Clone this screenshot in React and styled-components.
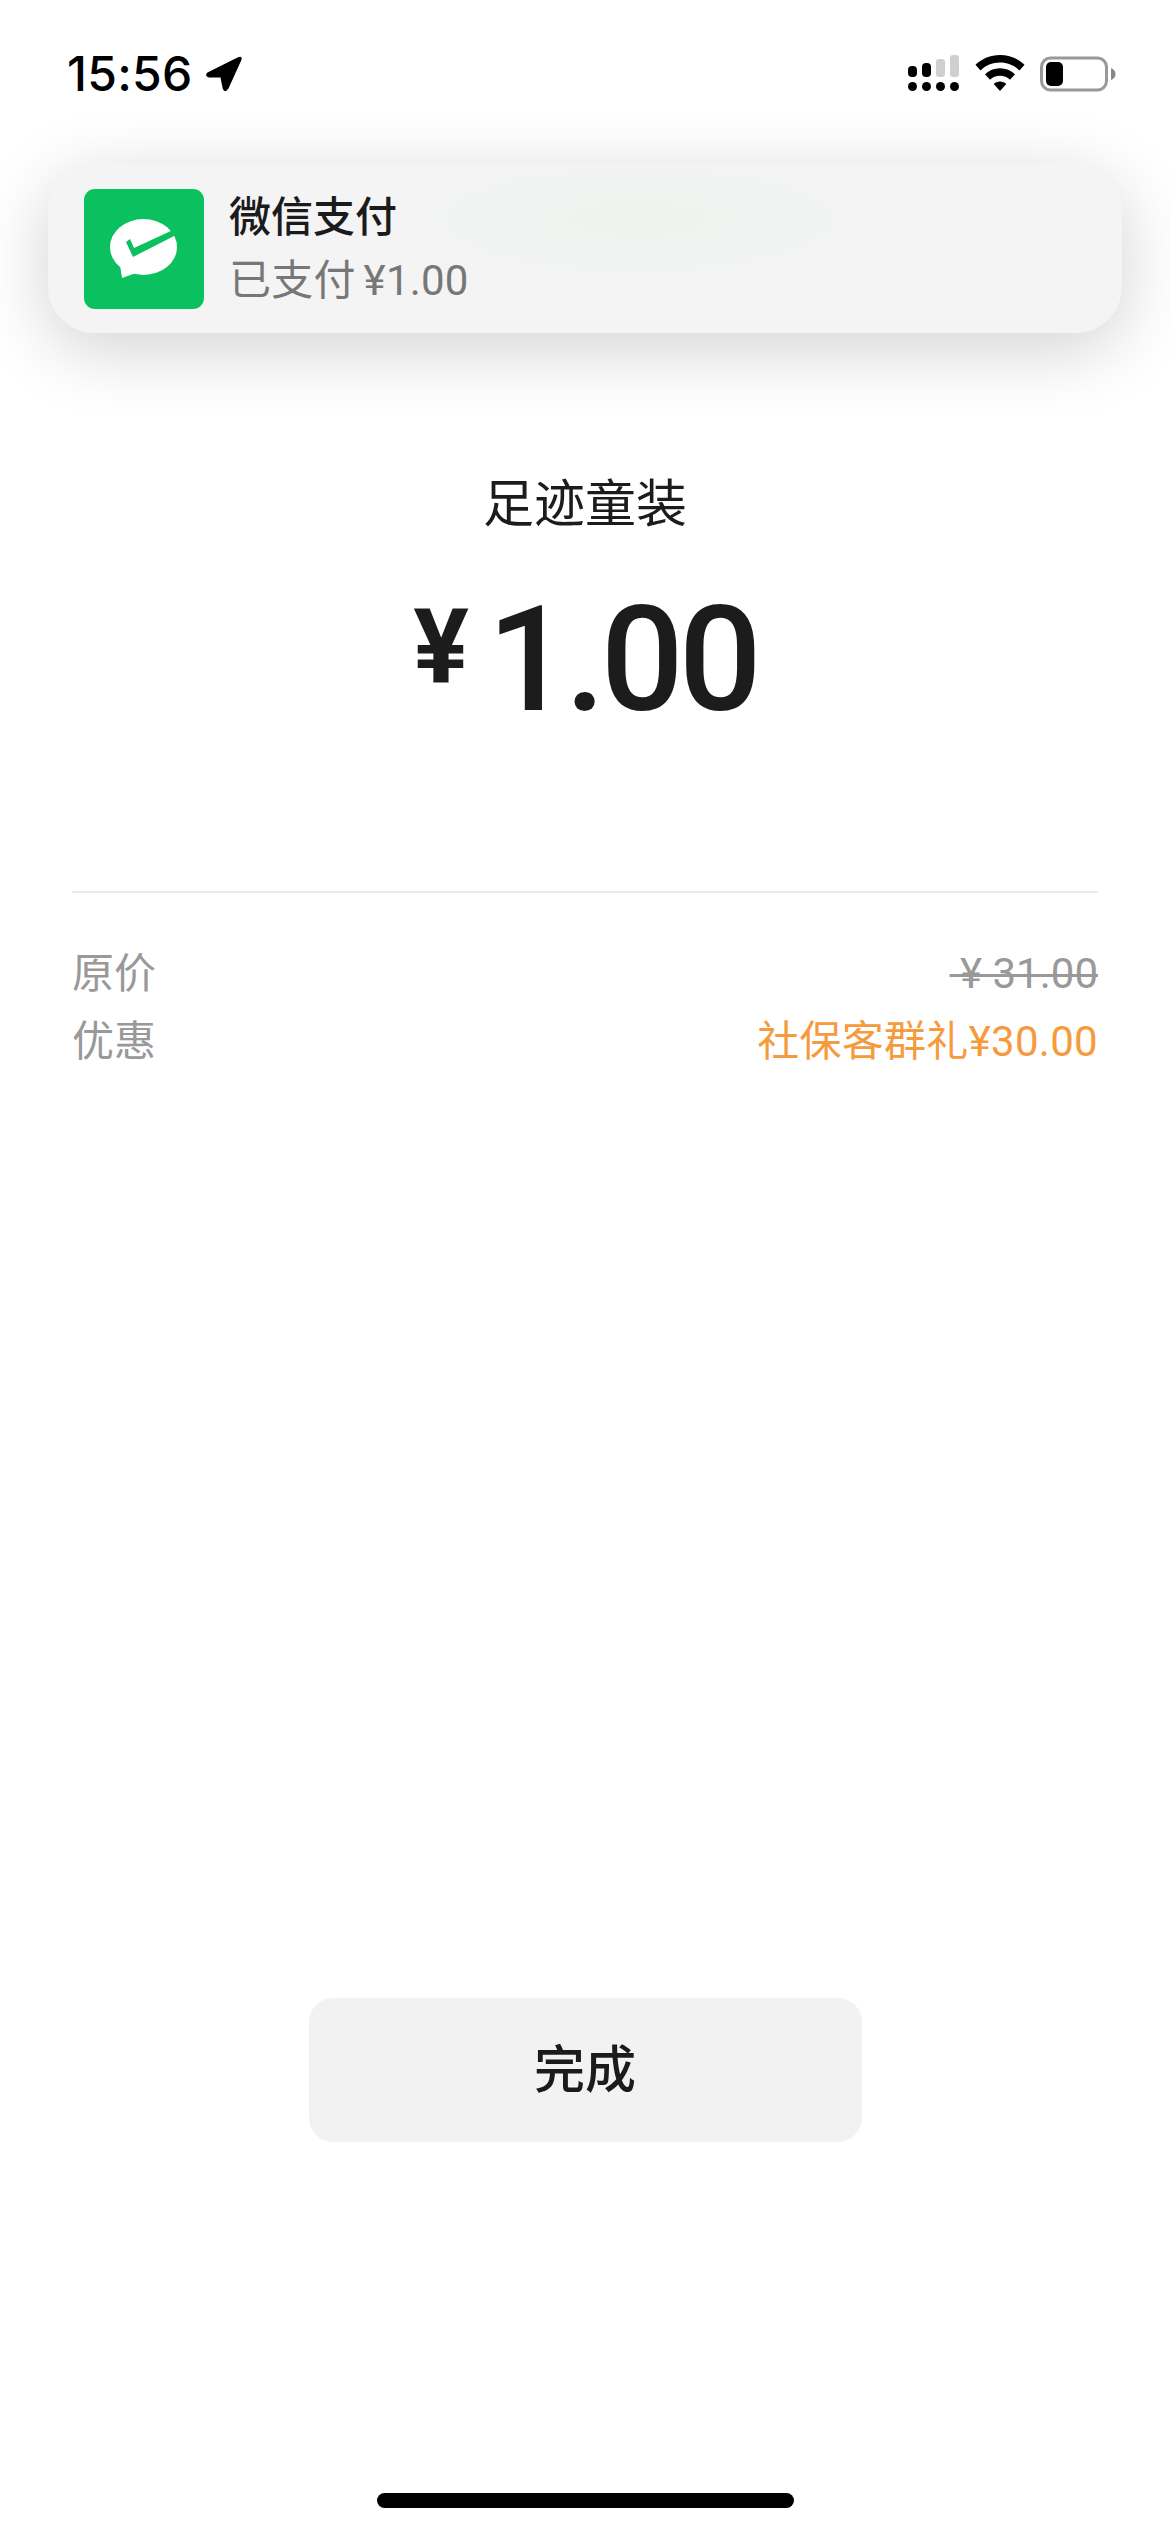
import styled, { createGlobalStyle } from 'styled-components';

const GlobalStyle = createGlobalStyle`
  html, body {
    margin: 0;
    background: #fff;
  }
  * {
    box-sizing: border-box;
  }
`;

const Page = styled.div`
  width: 1170px;
  height: 2532px;
  display: flex;
  flex-direction: column;
  overflow: hidden;
  background: #fff;
  color: #1b1b1b;
  font-family: Roboto, "Noto Sans CJK SC", sans-serif;
`;

const StatusBar = styled.div`
  height: 164px;
  padding: 50px 54px 0 67px;
  display: flex;
  justify-content: space-between;
  align-items: flex-start;
`;

const TimeGroup = styled.div`
  display: flex;
  align-items: center;
  gap: 12px;
  height: 48px;
`;

const Time = styled.span`
  font-family: Inter, sans-serif;
  font-size: 48px;
  line-height: 48px;
  font-weight: 500;
  letter-spacing: 0.3px;
  color: #000;
`;

const StatusIcons = styled.div`
  display: flex;
  align-items: center;
  gap: 15px;
  height: 48px;
`;

const Banner = styled.div`
  margin: 0 48px;
  height: 169px;
  padding: 25px 36px;
  display: flex;
  gap: 25px;
  border-radius: 46px;
  background:
    radial-gradient(ellipse 300px 80px at 590px 55px, #eef3ef 0%, rgba(238, 243, 239, 0) 100%),
    #f4f4f4;
  box-shadow: 0 16px 70px rgba(0, 0, 0, 0.18);
`;

const AppIcon = styled.div`
  width: 120px;
  height: 120px;
  flex: none;
  border-radius: 11px;
  background: #0bc05e;
  display: flex;
`;

const BannerText = styled.div`
  display: flex;
  flex-direction: column;
  padding-top: 1px;
`;

const BannerTitle = styled.div`
  font-size: 42px;
  line-height: 55px;
  font-weight: 500;
  color: #1b1b1b;
`;

const BannerBody = styled.div`
  font-size: 42px;
  line-height: 66px;
  color: #777;
  margin-top: 3px;
  display: flex;
  gap: 8px;
  letter-spacing: 0.2px;
`;

const Merchant = styled.div`
  margin-top: 139px;
  text-align: center;
  font-size: 51px;
  line-height: 66px;
  font-weight: 400;
  color: #1c1c1c;
`;

const Price = styled.div`
  margin-top: 47px;
  display: flex;
  justify-content: center;
  align-items: flex-start;
  gap: 18px;
  height: 152px;
`;

const PriceSign = styled.span`
  font-size: 104px;
  line-height: 124px;
  font-weight: 700;
  color: #1c1c1c;
`;

const PriceValue = styled.span`
  font-size: 146px;
  line-height: 152px;
  font-weight: 500;
  letter-spacing: -5px;
  color: #1c1c1c;
`;

const Divider = styled.div`
  margin: 154px 72px 0;
  height: 2px;
  background: #ececec;
`;

const Details = styled.div`
  margin-top: 53px;
  padding: 0 72px;
  display: flex;
  flex-direction: column;
  gap: 12px;
`;

const Row = styled.div`
  display: flex;
  justify-content: space-between;
  align-items: center;
  height: 56px;
  font-size: 42px;
  line-height: 56px;
`;

const Label = styled.span`
  color: #999;
`;

const OldPrice = styled.span`
  color: #999;
  text-decoration: line-through;
  text-decoration-thickness: 3px;
  white-space: pre;
`;

const Discount = styled.span`
  color: #f59b3d;
  letter-spacing: 0.3px;
`;

const ButtonArea = styled.div`
  margin-top: auto;
  display: flex;
  justify-content: center;
`;

const DoneButton = styled.button`
  width: 553px;
  height: 144px;
  padding: 0 0 8px;
  border: none;
  border-radius: 24px;
  background: #f2f2f2;
  color: #1b1b1b;
  font-family: inherit;
  font-size: 51px;
  font-weight: 500;
`;

const HomeArea = styled.div`
  height: 390px;
  padding-top: 351px;
  display: flex;
  justify-content: center;
`;

const HomeBar = styled.div`
  width: 417px;
  height: 15px;
  border-radius: 8px;
  background: #000;
`;

function LocationArrow() {
  return (
    <svg width="38" height="36" viewBox="0 0 38 36">
      <path
        d="M2.5 16.5 L33 1.2 Q37.8 -0.5 36.4 4 L23.5 32.5 Q20 37.5 17.8 33 L15.5 21.5 L4 21.5 Q-1 20 2.5 16.5 Z"
        fill="#000"
      />
    </svg>
  );
}

function SignalDots() {
  return (
    <svg width="52" height="38" viewBox="0 0 52 38">
      <g fill="#000">
        <rect x="0" y="11" width="9" height="11" rx="4" />
        <rect x="14" y="8" width="9" height="14" rx="4" />
        <circle cx="4.5" cy="31.5" r="4.5" />
        <circle cx="18.5" cy="31.5" r="4.5" />
        <circle cx="32.5" cy="31.5" r="4.5" />
        <circle cx="46.5" cy="31.5" r="4.5" />
      </g>
      <g fill="#cfcfcf">
        <rect x="28" y="4" width="9" height="18" rx="3" />
        <rect x="42" y="0" width="9" height="22" rx="3" />
      </g>
    </svg>
  );
}

function Wifi() {
  return (
    <svg width="50" height="38" viewBox="0 0 50 38">
      <path
        d="M25 0 C34.5 0 43 3.6 49.5 9.8 L44.5 15.5 C39.5 10.6 32.6 7.6 25 7.6 C17.4 7.6 10.5 10.6 5.5 15.5 L0.5 9.8 C7 3.6 15.5 0 25 0 Z"
        fill="#000"
      />
      <path
        d="M25 13.2 C30.8 13.2 36 15.4 40 19.2 L35 24.8 C32.4 22.3 28.9 20.8 25 20.8 C21.1 20.8 17.6 22.3 15 24.8 L10 19.2 C14 15.4 19.2 13.2 25 13.2 Z"
        fill="#000"
      />
      <path d="M25 26.4 C27.6 26.4 29.5 27.3 31.3 28.9 L25 36 L18.7 28.9 C20.5 27.3 22.4 26.4 25 26.4 Z" fill="#000" />
    </svg>
  );
}

function Battery() {
  return (
    <svg width="76" height="38" viewBox="0 0 76 38">
      <rect x="1.5" y="3" width="65" height="32" rx="9" fill="none" stroke="#999" strokeWidth="3" />
      <rect x="6" y="7" width="17" height="24" rx="5" fill="#000" />
      <path d="M71 13 Q75.5 15 75.5 19 Q75.5 23 71 25 Z" fill="#888" />
    </svg>
  );
}

function WeChatPayIcon() {
  return (
    <svg width="120" height="120" viewBox="0 0 120 120">
      <ellipse cx="59.5" cy="58" rx="33.5" ry="28" fill="#fff" />
      <path d="M38 89 L36 76 L52 84 Z" fill="#fff" />
      <path d="M42 53 L49 68 L92 46 L89 41 L50 59 L46 50 Z" fill="#0bc05e" />
    </svg>
  );
}

export default function App() {
  return (
    <Page>
      <GlobalStyle />
      <StatusBar>
        <TimeGroup>
          <Time>15:56</Time>
          <LocationArrow />
        </TimeGroup>
        <StatusIcons>
          <SignalDots />
          <Wifi />
          <Battery />
        </StatusIcons>
      </StatusBar>

      <Banner>
        <AppIcon>
          <WeChatPayIcon />
        </AppIcon>
        <BannerText>
          <BannerTitle>微信支付</BannerTitle>
          <BannerBody>
            <span>已支付</span>
            <span>¥1.00</span>
          </BannerBody>
        </BannerText>
      </Banner>

      <Merchant>足迹童装</Merchant>
      <Price>
        <PriceSign>¥</PriceSign>
        <PriceValue>1.00</PriceValue>
      </Price>

      <Divider />
      <Details>
        <Row>
          <Label>原价</Label>
          <OldPrice>{' ¥ 31.00'}</OldPrice>
        </Row>
        <Row>
          <Label>优惠</Label>
          <Discount>社保客群礼¥30.00</Discount>
        </Row>
      </Details>

      <ButtonArea>
        <DoneButton>完成</DoneButton>
      </ButtonArea>
      <HomeArea>
        <HomeBar />
      </HomeArea>
    </Page>
  );
}
